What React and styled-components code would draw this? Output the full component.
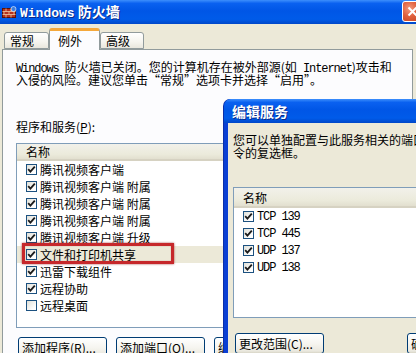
import React from 'react';
import styled, { createGlobalStyle } from 'styled-components';

const Global = createGlobalStyle`
  html, body { margin: 0; padding: 0; background: #ECE9D8; }
  body { font-family: "Noto Sans CJK SC", sans-serif; font-size: 12px; }
`;

const Screen = styled.div`
  position: relative;
  width: 416px;
  height: 353px;
  overflow: hidden;
  background: #ECE9D8;
  display: flex;
  flex-direction: column;
  font-family: "Noto Sans CJK SC", sans-serif;
  font-size: 12px;
  color: #000;
`;

const TitleBar = styled.div`
  height: ${p => p.$h || 24}px;
  flex: none;
  display: flex;
  align-items: center;
  padding-left: ${p => p.$pl || 2}px;
  background: linear-gradient(180deg, #3d8ffc 0%, #0a61f0 14%, #0056e6 45%, #005be9 80%, #0047c8 100%);
  border-top-left-radius: ${p => p.$r || 0}px;
`;

const Title = styled.div`
  flex: 1;
  margin-left: ${p => p.$ml || 3}px;
  color: #fff;
  font-weight: bold;
  font-size: 14px;
  line-height: 20px;
  white-space: nowrap;
  text-shadow: 1px 1px 0 #0a2a8a;
`;

const TitleLatin = styled.span`
  font-family: "Liberation Mono", monospace;
  font-size: 13px;
  font-weight: bold;
`;

const Close = styled.div`
  flex: none;
  width: 21px;
  height: 21px;
  margin-right: -7px;
  margin-top: -2px;
  box-sizing: border-box;
  border: 1px solid #fff;
  border-radius: 3px;
  background: radial-gradient(circle at 35% 35%, #f39a7e 0%, #e0603d 45%, #c2401c 100%);
  display: flex;
  align-items: center;
  justify-content: center;
`;

const TabStrip = styled.div`
  height: 25px;
  flex: none;
  display: flex;
  align-items: flex-end;
  padding-left: 4px;
`;

const Tab = styled.div`
  position: relative;
  z-index: ${p => (p.$active ? 2 : 1)};
  box-sizing: border-box;
  width: ${p => p.$w}px;
  height: ${p => (p.$active ? 22 : 17)}px;
  margin-bottom: ${p => (p.$active ? -1 : 0)}px;
  padding-left: ${p => (p.$active ? 8 : 5)}px;
  padding-top: ${p => (p.$active ? 2 : 0)}px;
  border: 1px solid #919B9C;
  border-bottom: ${p => (p.$active ? 'none' : '1px solid #919B9C')};
  border-top: ${p => (p.$active ? '3px solid #F5A83B' : '1px solid #919B9C')};
  border-radius: 3px 3px 0 0;
  background: ${p => (p.$active ? '#FCFCFE' : 'linear-gradient(180deg, #ffffff 0%, #f5f4ee 60%, #e9e7dd 100%)')};
  line-height: 15px;
  font-size: 12px;
  white-space: nowrap;
`;

const Panel = styled.div`
  flex: 1;
  margin: 0 3px 0 2px;
  border: 1px solid #919B9C;
  border-bottom: none;
  background: #FCFCFE;
  padding: 10px 0 0 13px;
  display: flex;
  flex-direction: column;
  min-height: 0;
`;

const Line = styled.div`
  flex: none;
  line-height: 13px;
  height: 13px;
  white-space: nowrap;
`;

const Latin = styled.span`
  font-family: "Liberation Mono", monospace;
  font-size: 12px;
  letter-spacing: -1.1px;
`;

const Label = styled.div`
  flex: none;
  margin-top: ${p => p.$mt || 0}px;
  line-height: 13px;
  height: 13px;
  white-space: nowrap;
`;

const Mnemonic = styled.span`
  text-decoration: underline;
`;

const ListBox = styled.div`
  flex: none;
  margin-top: ${p => p.$mt || 0}px;
  width: ${p => p.$w}px;
  height: ${p => p.$h}px;
  box-sizing: border-box;
  border: 1px solid #7F9DB9;
  background: #fff;
  display: flex;
  flex-direction: column;
`;

const Header = styled.div`
  flex: none;
  height: ${p => p.$h}px;
  box-sizing: border-box;
  padding-left: 9px;
  display: flex;
  align-items: center;
  background: linear-gradient(180deg, #f2f1ea 0%, #ebeadb 70%, #e2dfcf 100%);
  border-bottom: 2px solid #d6d2c2;
`;

const Row = styled.div`
  position: relative;
  flex: none;
  height: 17px;
  display: flex;
  align-items: center;
  gap: 3px;
  padding-left: 9px;
  background: ${p => (p.$selected ? '#ECE9D8' : 'transparent')};
  white-space: nowrap;
`;

const Box = styled.span`
  flex: none;
  width: 11px;
  height: 11px;
  box-sizing: border-box;
  border: 1px solid #1C5180;
  background: linear-gradient(135deg, #e0e0d8 0%, #ffffff 80%);
  display: flex;
  align-items: center;
  justify-content: center;
`;

const Highlight = styled.div`
  position: absolute;
  left: 5px;
  top: -3px;
  width: 152px;
  height: 21px;
  box-sizing: border-box;
  border: 3px solid #c6282b;
  box-shadow: 0 0 2px rgba(140, 0, 0, 0.7), inset 0 0 1px rgba(140, 0, 0, 0.6);
  pointer-events: none;
`;

const ButtonRow = styled.div`
  display: flex;
  gap: ${p => p.$gap || 9}px;
  margin-top: ${p => p.$mt || 0}px;
  margin-left: ${p => p.$ml || 0}px;
  flex: none;
`;

const Button = styled.div`
  flex: none;
  width: ${p => p.$w || 89}px;
  height: 21px;
  box-sizing: border-box;
  border: 1px solid #003C74;
  border-radius: 3px;
  background: linear-gradient(180deg, #ffffff 0%, #f6f5f0 50%, #eae8de 90%, #d8d5c6 100%);
  display: flex;
  align-items: center;
  padding-left: 3px;
  white-space: nowrap;
  overflow: hidden;
`;

const Dialog = styled.div`
  position: absolute;
  left: 224px;
  top: 99px;
  width: 210px;
  height: 280px;
  display: flex;
  flex-direction: column;
  border-top-left-radius: 7px;
  background: #0a3fd4;
  box-shadow: -1px 0 0 #0b2fa8;
`;

const DialogBody = styled.div`
  flex: 1;
  margin-left: 4px;
  background: #ECE9D8;
  padding: 10px 0 0 5px;
  display: flex;
  flex-direction: column;
  overflow: hidden;
`;

const CheckIcon = () => (
  <svg width="9" height="9" viewBox="0 0 9 9">
    <path d="M1.2 4.2 L3.4 6.6 L7.8 1.6" fill="none" stroke="#1a1a1a" strokeWidth="1.8" />
  </svg>
);

const CheckBox = ({ checked }) => <Box>{checked && <CheckIcon />}</Box>;

const FirewallIcon = () => (
  <svg width="15" height="13" viewBox="0 0 15 13">
    <rect x="0.5" y="2.5" width="13" height="9" fill="#b5321f" stroke="#5a1208" />
    <path d="M0.5 5.5 H13.5 M0.5 8.5 H13.5 M4 2.5 V5.5 M9 2.5 V5.5 M2 5.5 V8.5 M7 5.5 V8.5 M12 5.5 V8.5 M4 8.5 V11.5 M9 8.5 V11.5" stroke="#f0c8a0" strokeWidth="0.8" />
    <circle cx="11.5" cy="3" r="2.5" fill="#3b7de0" stroke="#fff" strokeWidth="0.6" />
  </svg>
);

const CloseX = () => (
  <svg width="11" height="11" viewBox="0 0 11 11">
    <path d="M1.5 1.5 L9.5 9.5 M9.5 1.5 L1.5 9.5" stroke="#fff" strokeWidth="2" />
  </svg>
);

const programs = [
  { name: '腾讯视频客户端', checked: true },
  { name: '腾讯视频客户端 附属', checked: true },
  { name: '腾讯视频客户端 附属', checked: true },
  { name: '腾讯视频客户端 附属', checked: true },
  { name: '腾讯视频客户端 升级', checked: true },
  { name: '文件和打印机共享', checked: true, selected: true, marked: true },
  { name: '迅雷下载组件', checked: true },
  { name: '远程协助', checked: true },
  { name: '远程桌面', checked: false },
];

const ports = ['TCP 139', 'TCP 445', 'UDP 137', 'UDP 138'];

export default function App() {
  return (
    <Screen>
      <Global />
      <TitleBar>
        <FirewallIcon />
        <Title>
          <TitleLatin>Windows</TitleLatin> 防火墙
        </Title>
        <Close>
          <CloseX />
        </Close>
      </TitleBar>
      <TabStrip>
        <Tab $w={45}>常规</Tab>
        <Tab $w={51} $active>例外</Tab>
        <Tab $w={44}>高级</Tab>
      </TabStrip>
      <Panel>
        <Line>
          <Latin>Windows </Latin>防火墙已关闭。您的计算机存在被外部源(如<Latin> Internet</Latin>)攻击和
        </Line>
        <Line>入侵的风险。建议您单击“常规”选项卡并选择“启用”。</Line>
        <Label $mt={34}>
          程序和服务(<Mnemonic>P</Mnemonic>):
        </Label>
        <ListBox $mt={10} $w={396} $h={185}>
          <Header $h={17}>名称</Header>
          {programs.map((p, i) => (
            <Row key={i} $selected={p.selected}>
              <CheckBox checked={p.checked} />
              {p.name}
              {p.marked && <Highlight />}
            </Row>
          ))}
        </ListBox>
        <ButtonRow $mt={9} $ml={2}>
          <Button>添加程序(R)...</Button>
          <Button>添加端口(O)...</Button>
          <Button>编辑(E)...</Button>
        </ButtonRow>
      </Panel>

      <Dialog>
        <TitleBar $h={24} $pl={4} $r={7}>
          <Title $ml={4}>编辑服务</Title>
        </TitleBar>
        <DialogBody>
          <Line>您可以单独配置与此服务相关的端口和协议。</Line>
          <Line>令的复选框。</Line>
          <ListBox $mt={28} $w={230} $h={131}>
            <Header $h={20}>名称</Header>
            {ports.map((p, i) => (
              <Row key={i}>
                <CheckBox checked />
                <Latin>{p}</Latin>
              </Row>
            ))}
          </ListBox>
          <ButtonRow $mt={15} $ml={2} $gap={83}>
            <Button>更改范围(C)...</Button>
            <Button $w={80}>确定</Button>
          </ButtonRow>
        </DialogBody>
      </Dialog>
    </Screen>
  );
}
